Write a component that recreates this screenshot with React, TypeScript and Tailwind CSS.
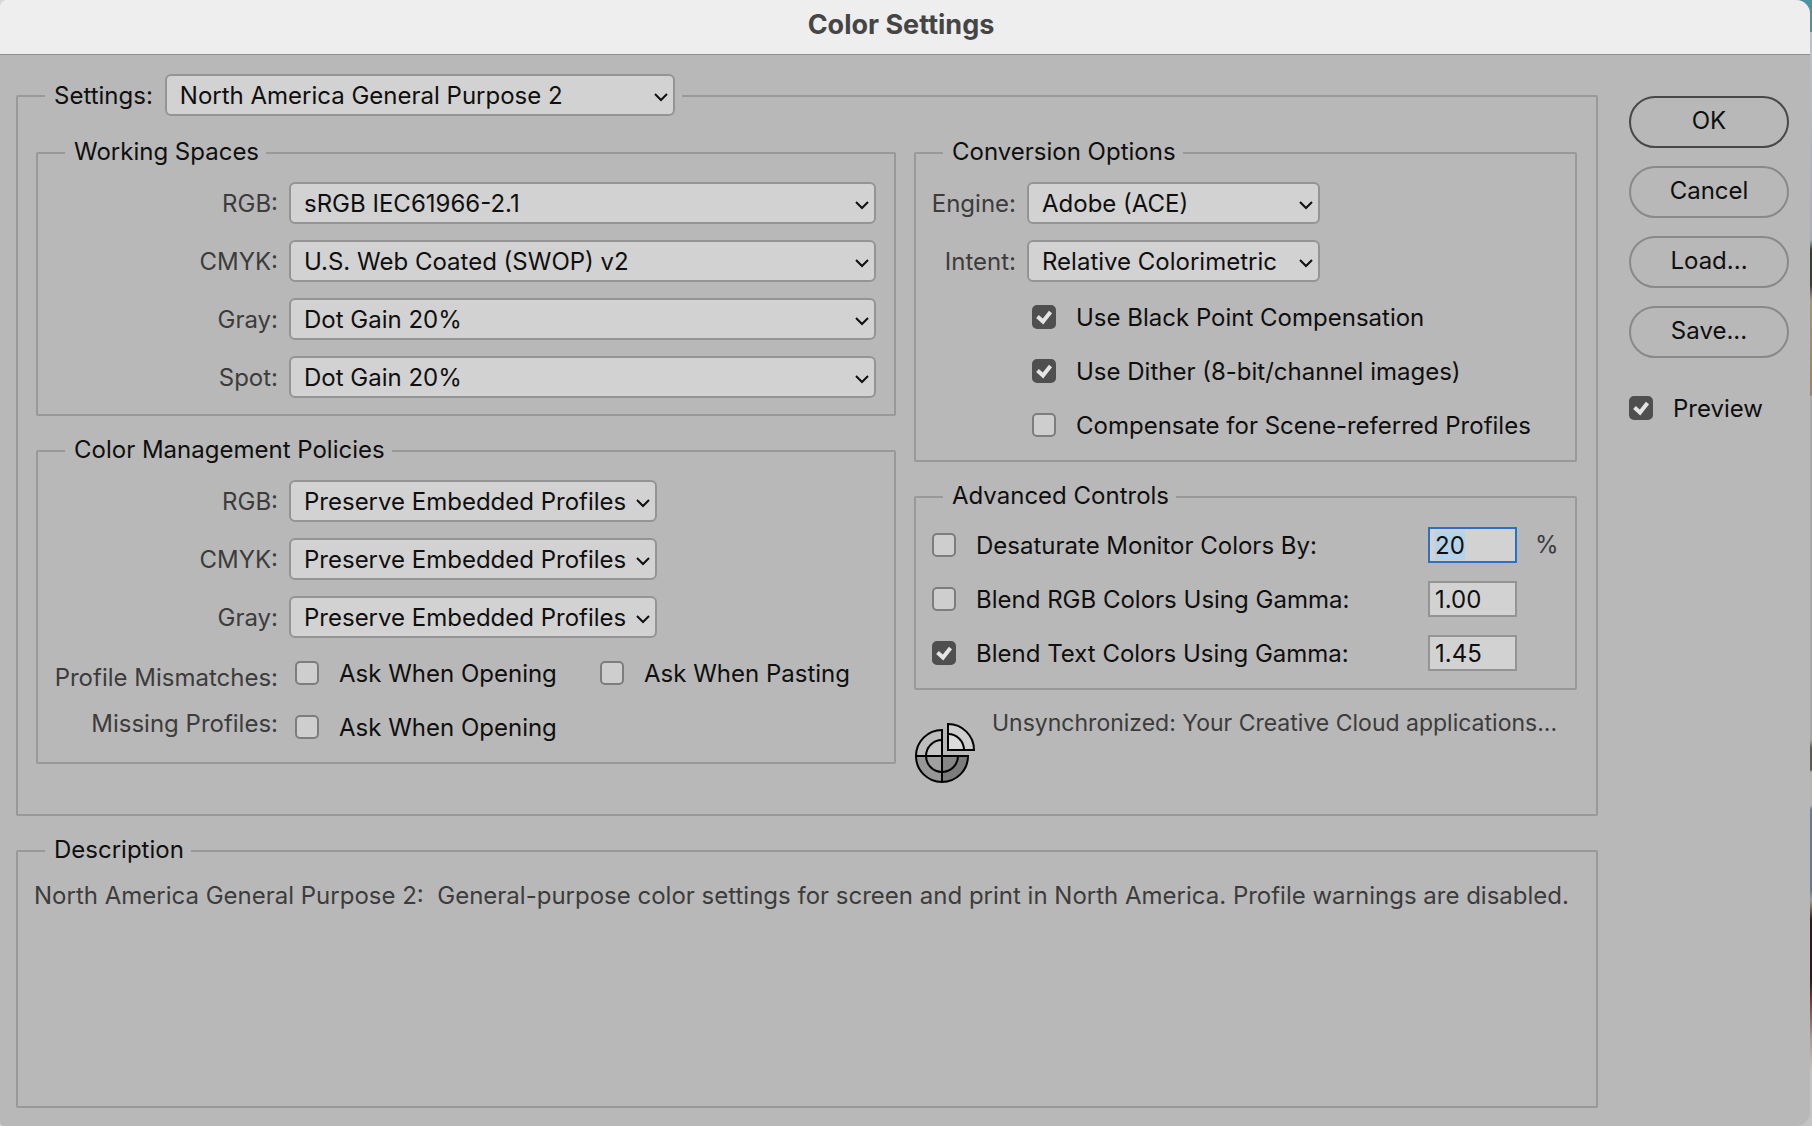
import { useEffect, useId, useRef } from 'react';
import type { ReactNode } from 'react';
import { clsx } from 'clsx';

interface SelectProps {
  id: string;
  options: string[];
  className?: string;
}

const POLICIES = ['Preserve Embedded Profiles', 'Convert to Working Space', 'Off'];

const WORKING_SPACES = [
  { label: 'RGB:', options: ['sRGB IEC61966-2.1', 'Adobe RGB (1998)'] },
  { label: 'CMYK:', options: ['U.S. Web Coated (SWOP) v2'] },
  { label: 'Gray:', options: ['Dot Gain 20%', 'Gray Gamma 2.2'] },
  { label: 'Spot:', options: ['Dot Gain 20%', 'Dot Gain 25%'] },
];

function Select({ id, options, className }: SelectProps) {
  return (
    <div className={clsx('relative', className)}>
      <select
        id={id}
        className="block h-[42px] w-full appearance-none rounded-md border-2 border-[#949494] bg-[#d2d2d2] pt-0.5 pr-7 pl-[13px] text-[#0f0f0f] outline-none"
      >
        {options.map((o) => (
          <option key={o}>{o}</option>
        ))}
      </select>
      <svg
        viewBox="0 0 14 10"
        fill="none"
        stroke="#0f0f0f"
        strokeWidth="2"
        className="pointer-events-none absolute top-[18px] right-[7px] h-[10px] w-[14px]"
      >
        <path d="M1 2l6 6 6-6" />
      </svg>
    </div>
  );
}

function Group({
  legend,
  className,
  children,
}: {
  legend: ReactNode;
  className?: string;
  children: ReactNode;
}) {
  return (
    <fieldset className={clsx('min-w-0 rounded-xs border-2 border-[#999]', className)}>
      <legend className="ml-[27px] pr-[7px] pb-0.5 pl-[9px]">{legend}</legend>
      {children}
    </fieldset>
  );
}

function Field({
  label,
  options,
  labelClass,
  selectClass,
}: {
  label: string;
  options: string[];
  labelClass: string;
  selectClass: string;
}) {
  const id = useId();
  return (
    <div className="flex items-center gap-[11px]">
      <label htmlFor={id} className={clsx('shrink-0 pt-0.5 text-right text-[#3c3c3c]', labelClass)}>
        {label}
      </label>
      <Select id={id} options={options} className={selectClass} />
    </div>
  );
}

function Check({ label, checked = false }: { label: string; checked?: boolean }) {
  return (
    <label className="flex h-6 items-center gap-5 whitespace-nowrap">
      <span className="relative size-6 shrink-0">
        <input
          type="checkbox"
          defaultChecked={checked}
          className="peer block size-6 appearance-none rounded-[5px] border-2 border-[#7d7d7d] bg-[#cecece] checked:border-[#4f4f4f] checked:bg-[#4f4f4f]"
        />
        <svg
          viewBox="0 0 24 24"
          fill="none"
          stroke="#e4e4e4"
          strokeWidth="4"
          className="pointer-events-none absolute inset-0 hidden size-6 peer-checked:block"
        >
          <path d="M5.5 11.5l5.5 5 7.5-9.5" />
        </svg>
      </span>
      <span className="pt-0.5">{label}</span>
    </label>
  );
}

function NumberBox({
  label,
  value,
  selected = false,
}: {
  label: string;
  value: string;
  selected?: boolean;
}) {
  const ref = useRef<HTMLInputElement>(null);

  useEffect(() => {
    if (selected) {
      ref.current?.focus();
      ref.current?.select();
    }
  }, [selected]);

  return (
    <input
      ref={ref}
      type="text"
      aria-label={label}
      defaultValue={value}
      className="h-9 w-[89px] shrink-0 border-2 border-[#949494] bg-[#d2d2d2] pl-[5px] leading-8 text-[#0f0f0f] outline-none selection:bg-[#b5d3ea] selection:text-[#0f0f0f] focus:border-[#2a70c6]"
    />
  );
}

function SyncIcon() {
  return (
    <svg viewBox="0 0 60 60" className="mt-[14px] size-[60px] shrink-0" aria-hidden="true">
      <path d="M27 33H1A26 26 0 0 1 27 7z" fill="#bdbdbd" />
      <path d="M27 33H11A16 16 0 0 1 27 17z" fill="#c6c6c6" />
      <path d="M27 33H1A26 26 0 0 0 27 59z" fill="#979797" />
      <path d="M27 33H11A16 16 0 0 0 27 49z" fill="#a0a0a0" />
      <path d="M27 33H53A26 26 0 0 1 27 59z" fill="#7c7c7c" />
      <path d="M27 33H43A16 16 0 0 1 27 49z" fill="#868686" />
      <path d="M33 27V1A26 26 0 0 1 59 27z" fill="#cfcfcf" />
      <path d="M33 27V11A16 16 0 0 1 49 27z" fill="#dcdcdc" />
      <g fill="none" stroke="#000" strokeWidth="2">
        <path d="M27 59V7A26 26 0 1 0 53 33H1" />
        <path d="M27 17A16 16 0 1 0 43 33" />
        <path d="M33 27V1A26 26 0 0 1 59 27z" />
        <path d="M33 11A16 16 0 0 1 49 27" />
      </g>
    </svg>
  );
}

function DialogButton({ children, primary = false }: { children: string; primary?: boolean }) {
  return (
    <button
      type="button"
      className={clsx(
        'h-[52px] w-full rounded-full border-2 pb-0.5',
        primary ? 'border-[#484848]' : 'border-[#898989]'
      )}
    >
      {children}
    </button>
  );
}

export default function App() {
  return (
    <div className="flex min-h-screen bg-[#d6d6d6] bg-[linear-gradient(#4a93a5_0_32px,#b9c4c6_32px,#9fb0b6_240px,#3b3d38_250px_285px,#a8955f_300px,#b07a58_395px,#a6a6a6_396px_740px,#5c5a55_748px_770px,#b5b5b0_772px_805px,#5f7b99_810px_890px,#a79a86_900px,#3a1712_920px_980px,#8a2f2a_1000px,#b09a88_1040px,#c4c4c4_1072px)] bg-[length:40px_100%] bg-right bg-no-repeat pr-0.5 font-[Inter,sans-serif] text-2xl leading-7 text-[#0f0f0f]">
      <div className="flex min-w-0 flex-1 flex-col overflow-hidden rounded-tl-md rounded-tr-[14px] rounded-br-[14px] rounded-bl-sm bg-[#b8b8b8]">
        <header className="flex h-[55px] items-center justify-center border-b border-[#8f8f8f] bg-[#eee] pr-2 pb-1">
          <h1 className="text-[27px] font-bold text-[#454545]">Color Settings</h1>
        </header>

        <main className="flex flex-1 gap-[31px] pt-[19px] pr-[21px] pb-[18px] pl-4">
          <div className="flex min-w-0 flex-1 flex-col gap-5">
            <Group
              legend={
                <div className="flex items-start gap-3">
                  <label htmlFor="preset" className="pt-2">
                    Settings:
                  </label>
                  <Select
                    id="preset"
                    options={['North America General Purpose 2', 'Monitor Color', 'Custom']}
                    className="w-[510px]"
                  />
                </div>
              }
            >
              <div className="grid grid-cols-[860fr_663fr] gap-[18px] pt-5 pr-[19px] pb-[31px] pl-[18px]">
                <div className="flex min-w-0 flex-col gap-5">
                  <Group legend="Working Spaces">
                    <div className="flex flex-col gap-4 pt-[14px] pr-[18px] pb-4">
                      {WORKING_SPACES.map((f) => (
                        <Field
                          key={f.label}
                          label={f.label}
                          options={f.options}
                          labelClass="w-60"
                          selectClass="flex-1"
                        />
                      ))}
                    </div>
                  </Group>

                  <Group legend="Color Management Policies">
                    <div className="flex flex-col gap-4 pt-[14px]">
                      {['RGB:', 'CMYK:', 'Gray:'].map((label) => (
                        <Field
                          key={label}
                          label={label}
                          options={POLICIES}
                          labelClass="w-60"
                          selectClass="w-[368px]"
                        />
                      ))}
                    </div>
                    <div className="flex gap-[17px] py-[23px]">
                      <div className="flex w-60 shrink-0 flex-col gap-[18px] pt-[3px] text-right whitespace-nowrap text-[#3c3c3c]">
                        <span>Profile Mismatches:</span>
                        <span>Missing Profiles:</span>
                      </div>
                      <div className="grid grid-cols-[305px_auto] gap-y-[30px]">
                        <Check label="Ask When Opening" />
                        <Check label="Ask When Pasting" />
                        <Check label="Ask When Opening" />
                      </div>
                    </div>
                  </Group>
                </div>

                <div className="flex min-w-0 flex-col">
                  <Group legend="Conversion Options">
                    <div className="flex flex-col gap-4 pt-[14px]">
                      <Field
                        label="Engine:"
                        options={['Adobe (ACE)', 'Apple CMM']}
                        labelClass="w-[100px]"
                        selectClass="w-[293px]"
                      />
                      <Field
                        label="Intent:"
                        options={['Relative Colorimetric', 'Perceptual', 'Saturation']}
                        labelClass="w-[100px]"
                        selectClass="w-[293px]"
                      />
                    </div>
                    <div className="flex flex-col gap-[30px] py-[23px] pl-[116px]">
                      <Check label="Use Black Point Compensation" checked />
                      <Check label="Use Dither (8-bit/channel images)" checked />
                      <Check label="Compensate for Scene-referred Profiles" />
                    </div>
                  </Group>

                  <Group legend="Advanced Controls" className="mt-5">
                    <div className="flex flex-col gap-[18px] pt-[15px] pr-[17px] pb-[17px] pl-4">
                      <div className="flex items-center">
                        <Check label="Desaturate Monitor Colors By:" />
                        <div className="ml-auto flex w-[130px] items-center gap-[18px]">
                          <NumberBox label="Desaturate amount" value="20" selected />
                          <span className="text-[#3c3c3c]">%</span>
                        </div>
                      </div>
                      <div className="flex items-center">
                        <Check label="Blend RGB Colors Using Gamma:" />
                        <div className="ml-auto flex w-[130px]">
                          <NumberBox label="RGB gamma" value="1.00" />
                        </div>
                      </div>
                      <div className="flex items-center">
                        <Check label="Blend Text Colors Using Gamma:" checked />
                        <div className="ml-auto flex w-[130px]">
                          <NumberBox label="Text gamma" value="1.45" />
                        </div>
                      </div>
                    </div>
                  </Group>

                  <div className="flex gap-[17px] pt-[19px] pl-px">
                    <SyncIcon />
                    <p className="text-[23px] whitespace-nowrap text-[#3c3c3c]">
                      Unsynchronized: Your Creative Cloud applications...
                    </p>
                  </div>
                </div>
              </div>
            </Group>

            <Group legend="Description" className="flex-1">
              <p className="px-4 pt-4 whitespace-pre-wrap text-[#3c3c3c]">
                {
                  'North America General Purpose 2:  General-purpose color settings for screen and print in North America. Profile warnings are disabled.'
                }
              </p>
            </Group>
          </div>

          <aside className="flex w-[160px] shrink-0 flex-col gap-[18px] pt-[22px]">
            <DialogButton primary>OK</DialogButton>
            <DialogButton>Cancel</DialogButton>
            <DialogButton>Load...</DialogButton>
            <DialogButton>Save...</DialogButton>
            <div className="pt-5">
              <Check label="Preview" checked />
            </div>
          </aside>
        </main>
      </div>
    </div>
  );
}
